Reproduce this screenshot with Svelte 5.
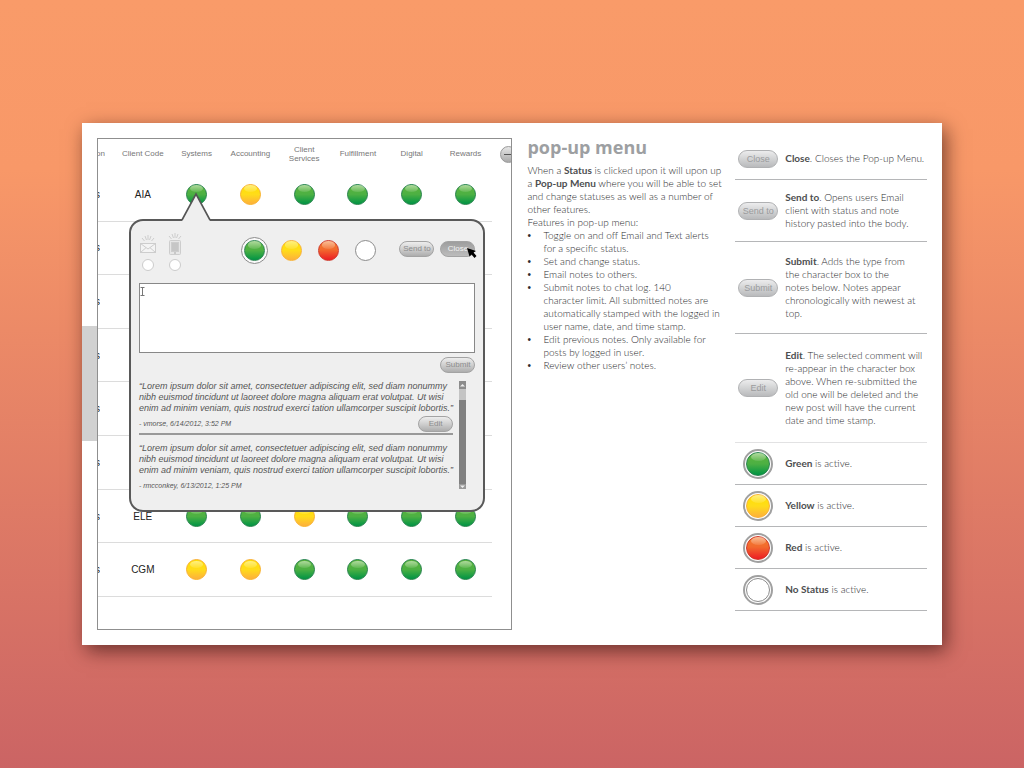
<script lang="ts">
  type Color = 'green' | 'yellow' | 'red' | 'none';

  const columns = ['Systems', 'Accounting', 'Client Services', 'Fulfillment', 'Digital', 'Rewards'];

  const rows: { code: string; statuses: Color[] }[] = [
    { code: 'AIA', statuses: ['green', 'yellow', 'green', 'green', 'green', 'green'] },
    { code: '', statuses: [] },
    { code: '', statuses: [] },
    { code: '', statuses: [] },
    { code: '', statuses: [] },
    { code: '', statuses: [] },
    { code: 'ELE', statuses: ['green', 'green', 'yellow', 'green', 'green', 'green'] },
    { code: 'CGM', statuses: ['yellow', 'yellow', 'green', 'green', 'green', 'green'] },
  ];

  const choices: Color[] = ['green', 'yellow', 'red', 'none'];

  const lorem = [
    '“Lorem ipsum dolor sit amet, consectetuer adipiscing elit, sed diam nonummy',
    'nibh euismod tincidunt ut laoreet dolore magna aliquam erat volutpat. Ut wisi',
    'enim ad minim veniam, quis nostrud exerci tation ullamcorper suscipit lobortis.”',
  ].join('\n');

  const notes = [
    { author: 'vmorse, 6/14/2012, 3:52 PM', editable: true },
    { author: 'rmcconkey, 6/13/2012, 1:25 PM', editable: false },
  ];

  const features = [
    'Toggle on and off Email and Text alerts\nfor a specific status.',
    'Set and change status.',
    'Email notes to others.',
    'Submit notes to chat log. 140\ncharacter limit. All submitted notes are\nautomatically stamped with the logged in\nuser name, date, and time stamp.',
    'Edit previous notes. Only available for\nposts by logged in user.',
    'Review other users’ notes.',
  ];

  const actions = [
    { name: 'Close', size: 'short', text: '. Closes the Pop-up Menu.' },
    { name: 'Send to', size: 'medium', text: '. Opens users Email\nclient with status and note\nhistory pasted into the body.' },
    { name: 'Submit', size: 'tall', text: '. Adds the type from\nthe character box to the\nnotes below. Notes appear\nchronologically with newest at\ntop.' },
    { name: 'Edit', size: 'tallest', text: '. The selected comment will\nre-appear in the character box\nabove. When re-submitted the\nold one will be deleted and the\nnew post will have the current\ndate and time stamp.' },
  ];

  const legend: { name: string; color: Color }[] = [
    { name: 'Green', color: 'green' },
    { name: 'Yellow', color: 'yellow' },
    { name: 'Red', color: 'red' },
    { name: 'No Status', color: 'none' },
  ];

  let selected: Color = $state('green');
  let note = $state('');
</script>

<main>
  <article class="card">
    <div class="tab"></div>

    <section class="board">
      <table>
        <colgroup>
          <col class="edge-col" />
          <col span="7" />
        </colgroup>
        <thead>
          <tr>
            <th><span class="edge wide">on</span></th>
            <th>Client Code</th>
            {#each columns as column}
              <th>{column}</th>
            {/each}
          </tr>
        </thead>
        <tbody>
          {#each rows as row}
            <tr>
              <td><span class="edge">s</span></td>
              <td>{row.code}</td>
              {#each columns as column, i}
                <td>
                  {#if row.statuses[i]}
                    <button class="orb {row.statuses[i]}" aria-label={column}></button>
                  {/if}
                </td>
              {/each}
            </tr>
          {/each}
        </tbody>
      </table>
      <div class="side">
        <button class="collapse" aria-label="Collapse"></button>
      </div>

      <div class="popup">
        <svg class="pointer" width="30" height="30" viewBox="0 0 30 30">
          <path d="M1 29 L15 2 L29 29 V30 H1 Z" fill="#efefef" />
          <path d="M1 28 L15 2 L29 28" fill="none" stroke="#555" stroke-width="1.6" />
        </svg>

        <div class="toolbar">
          <div class="alerts">
            <label>
              <svg width="18" height="22" viewBox="0 0 18 22" fill="none" stroke="#cdcdcd">
                <path d="M9 2v5M6 3l1.5 4M12 3l-1.5 4M3 5l2.5 3M15 5l-2.5 3" />
                <rect x="1.5" y="10.5" width="15" height="9" fill="#f4f4f4" />
                <path d="M1.5 10.5L9 16l7.5-5.5M1.5 19.5L7 14.7M16.5 19.5L11 14.7" />
              </svg>
              <input type="checkbox" aria-label="Email" />
            </label>
            <label>
              <svg width="18" height="22" viewBox="0 0 18 22" fill="none" stroke="#cdcdcd">
                <path d="M9 0v5M6 1l1.5 4M12 1l-1.5 4M3 3l2.5 3M15 3l-2.5 3" />
                <rect x="3.5" y="7.5" width="11" height="14" rx="1" fill="#e6e6e6" />
                <rect x="5.5" y="9.5" width="7" height="9" fill="#c6c6c6" />
                <path d="M8 20h2" stroke="#aaa" />
              </svg>
              <input type="checkbox" aria-label="Text" />
            </label>
          </div>

          <div class="choices">
            {#each choices as color}
              <span class="choice" class:picked={selected === color}>
                <button class="orb {color}" aria-label={color} onclick={() => (selected = color)}></button>
              </span>
            {/each}
          </div>

          <div class="actions">
            <button class="pill">Send to</button>
            <button class="pill pressed">Close</button>
            <svg class="cursor" width="11" height="12" viewBox="0 0 11 12">
              <path d="M1 1 L10 4 L7.5 5.5 L10.5 9 L8.5 11 L5.5 7.5 L3.5 9.5 Z" fill="#000" />
            </svg>
          </div>
        </div>

        <div class="entry">
          <textarea aria-label="Note" maxlength="140" bind:value={note}></textarea>
          <svg class="caret" width="5" height="9" viewBox="0 0 5 9" fill="none" stroke="#777">
            <path d="M0.5 0.5h4M0.5 8.5h4M2.5 0.5v8" />
          </svg>
        </div>

        <div class="submit">
          <button class="pill">Submit</button>
        </div>

        <div class="log">
          <div class="notes">
            {#each notes as item}
              <div class="note">
                <p>{lorem}</p>
                <div class="byline">
                  <span>- {item.author}</span>
                  {#if item.editable}
                    <button class="pill">Edit</button>
                  {/if}
                </div>
              </div>
            {/each}
          </div>
          <div class="scrollbar">
            <svg width="7" height="8" viewBox="0 0 7 8">
              <rect width="7" height="8" fill="#8c8c8c" />
              <path d="M1 5.5L3.5 3L6 5.5Z" fill="#eee" />
            </svg>
            <span class="thumb"></span>
            <svg width="7" height="5" viewBox="0 0 7 5">
              <rect width="7" height="5" fill="#999" />
              <path d="M1 1.5L3.5 4L6 1.5Z" fill="#eee" />
            </svg>
          </div>
        </div>
      </div>
    </section>

    <section class="intro">
      <h1>pop-up menu</h1>
      <p>When a <b>Status</b> is clicked upon it will upon up<br />a <b>Pop-up Menu</b> where you will be able to set<br />and change statuses as well as a number of<br />other features.</p>
      <p>Features in pop-up menu:</p>
      <ul>
        {#each features as feature}
          <li>{feature}</li>
        {/each}
      </ul>
    </section>

    <ul class="legend">
      {#each actions as action}
        <li class={action.size}>
          <span class="sample"><button class="pill large">{action.name}</button></span>
          <p><b>{action.name}</b>{action.text}</p>
        </li>
      {/each}
      {#each legend as item}
        <li class="short">
          <span class="sample"><span class="ring"><span class="orb big {item.color}"></span></span></span>
          <p><b>{item.name}</b> is active.</p>
        </li>
      {/each}
    </ul>
  </article>
</main>

<style>
  :global(body) {
    margin: 0;
    font-family: Lato, 'Open Sans', sans-serif;
    color: #2c2d2f;
  }

  main {
    min-height: 100vh;
    display: flex;
    align-items: center;
    justify-content: center;
    background: linear-gradient(#f99b69 0%, #f89868 22%, #cb6464 100%);
  }

  h1,
  p,
  ul {
    margin: 0;
    padding: 0;
  }

  ul {
    list-style: none;
  }

  b {
    font-weight: 700;
    color: #4d4e50;
  }

  button {
    padding: 0;
    font-family: 'Liberation Sans', Arial, sans-serif;
    cursor: pointer;
  }

  .card {
    position: relative;
    box-sizing: border-box;
    width: 84%;
    padding: 15px;
    display: grid;
    grid-template-columns: minmax(0, 416fr) minmax(0, 193fr) minmax(0, 192fr);
    column-gap: 15px;
    background: #fff;
    box-shadow: 4px 6px 18px rgba(40, 10, 10, 0.6);
    font-size: 10px;
    line-height: 13px;
    font-weight: 300;
  }

  .tab {
    position: absolute;
    left: 0;
    top: 203px;
    width: 15px;
    height: 115px;
    background: #d1d1d1;
  }

  .board {
    position: relative;
    display: grid;
    grid-template-columns: minmax(0, 1fr) 19px;
    align-items: start;
    padding-bottom: 32px;
    border: 1px solid #8f8f8f;
    background: #fff;
    font-family: 'Liberation Sans', Arial, sans-serif;
    font-weight: normal;
  }

  table {
    width: 100%;
    height: 458px;
    table-layout: fixed;
    border-collapse: collapse;
    text-align: center;
  }

  .edge-col {
    width: 18px;
  }

  th,
  td {
    padding: 0;
    vertical-align: middle;
  }

  th {
    height: 29px;
    font-size: 8px;
    line-height: 9px;
    font-weight: normal;
    color: #777;
  }

  th:nth-child(5) {
    padding: 0 8px;
  }

  td {
    height: 52px;
    border-bottom: 1px solid #dcdcdc;
    font-size: 10px;
    color: #222;
  }

  .edge {
    display: flex;
    justify-content: flex-end;
    width: 2px;
    overflow: hidden;
  }

  .edge.wide {
    width: 7px;
  }

  .side {
    overflow: hidden;
  }

  .collapse {
    position: relative;
    display: block;
    width: 17px;
    height: 17px;
    margin: 7px 0 0 8px;
    border: 1px solid #999;
    border-radius: 50%;
    background: linear-gradient(#e6e6e6, #a9a9a9);
  }

  .collapse::before {
    content: '';
    position: absolute;
    left: 3px;
    top: 7px;
    width: 9px;
    height: 1px;
    background: #555;
  }

  .orb {
    position: relative;
    display: block;
    box-sizing: border-box;
    width: 21px;
    height: 21px;
    margin: 0 auto;
    border: 1px solid;
    border-radius: 50%;
  }

  .orb::before {
    content: '';
    position: absolute;
    left: 15%;
    top: 2%;
    width: 70%;
    height: 38%;
    border-radius: 50%;
    background: linear-gradient(rgba(255, 255, 255, 0.5), rgba(255, 255, 255, 0.1));
  }

  .orb.big {
    width: 24px;
    height: 24px;
  }

  .green {
    border-color: #2a8450;
    background: linear-gradient(#5fb53c, #4cb043 50%, #009444);
  }

  .yellow {
    border-color: #f9b233;
    background: linear-gradient(#ffe100, #ffdc1a 50%, #fdb03c);
  }

  .red {
    border-color: #d0392b;
    background: linear-gradient(#f47b2c, #f26a2e 45%, #ed1c24);
  }

  .none {
    border-color: #8c8c8c;
    background: #fff;
  }

  .none::before {
    display: none;
  }

  .popup {
    position: absolute;
    left: 31px;
    right: 26px;
    top: 80px;
    box-sizing: border-box;
    padding: 12px 8px 15px;
    border: 2px solid #595959;
    border-radius: 14px;
    background: #efefef;
  }

  .pointer {
    position: absolute;
    left: 50px;
    top: -29px;
  }

  .toolbar {
    display: flex;
    align-items: flex-start;
  }

  .alerts {
    display: flex;
    gap: 9px;
    width: 102px;
  }

  .alerts label {
    display: flex;
    flex-direction: column;
    align-items: center;
    gap: 4px;
  }

  .alerts input {
    appearance: none;
    box-sizing: border-box;
    width: 12px;
    height: 12px;
    margin: 0;
    border: 1px solid #ccc;
    border-radius: 50%;
    background: #fff;
  }

  .alerts input:checked {
    background: #999;
  }

  .choices {
    display: flex;
    gap: 10px;
    padding-top: 4px;
  }

  .choice,
  .ring {
    box-sizing: border-box;
    display: flex;
    align-items: center;
    justify-content: center;
    width: 27px;
    height: 27px;
    border: 1px solid transparent;
    border-radius: 50%;
  }

  .choice.picked {
    border-color: #8c8c8c;
    background: #fafafa;
  }

  .actions {
    position: relative;
    display: flex;
    gap: 6px;
    margin-left: auto;
    padding-top: 8px;
  }

  .pill {
    box-sizing: border-box;
    width: 35px;
    height: 16px;
    border: 1px solid #a3a3a3;
    border-radius: 8px;
    background: linear-gradient(#ededed, #cfcfcf 50%, #adadad);
    color: #8c8c8c;
    font-size: 8px;
    line-height: 12px;
  }

  .pill.pressed {
    background: linear-gradient(#9e9e9e, #bcbcbc);
    color: #f2f2f2;
  }

  .pill.large {
    width: 40px;
    height: 18px;
    border-color: #b0b1b3;
    border-radius: 9px;
    background: linear-gradient(#ececed, #d2d3d4 50%, #b9babc);
    color: #9a9b9d;
    font-size: 9px;
  }

  .cursor {
    position: absolute;
    right: -2px;
    bottom: -2px;
  }

  .entry {
    position: relative;
    display: flex;
    margin-top: 12px;
  }

  textarea {
    flex: 1;
    min-width: 0;
    box-sizing: border-box;
    height: 70px;
    padding: 4px 8px;
    border: 1px solid #888;
    border-radius: 0;
    background: #fff;
    font-family: 'Liberation Sans', Arial, sans-serif;
    font-size: 9px;
    resize: none;
    outline: none;
  }

  .caret {
    position: absolute;
    left: 1px;
    top: 4px;
  }

  .submit {
    display: flex;
    justify-content: flex-end;
    padding-top: 4px;
  }

  .log {
    display: flex;
    align-items: flex-start;
    justify-content: space-between;
    margin-top: 8px;
    padding-right: 9px;
  }

  .note p {
    white-space: pre;
    font-size: 9px;
    line-height: 11px;
    font-style: italic;
    color: #555;
  }

  .note + .note {
    margin-top: 8px;
  }

  .note:first-child {
    border-bottom: 2px solid #999;
  }

  .byline {
    display: flex;
    align-items: center;
    justify-content: space-between;
    height: 19px;
    font-size: 7px;
    font-style: italic;
    color: #555;
  }

  .scrollbar {
    display: flex;
    flex-direction: column;
    width: 7px;
    height: 108px;
    background: #808080;
  }

  .thumb {
    height: 11px;
    margin-bottom: auto;
    background: #c4c4c4;
  }

  .intro h1 {
    margin-bottom: 8px;
    font-family: 'Open Sans', sans-serif;
    font-size: 18px;
    line-height: 18px;
    font-weight: bold;
    color: #9d9fa2;
  }

  .intro p,
  .intro li {
    white-space: pre;
  }

  .intro li {
    position: relative;
    padding-left: 16px;
  }

  .intro li::before {
    content: '•';
    position: absolute;
    left: 0;
    font-family: 'Liberation Sans', Arial, sans-serif;
  }

  .legend li {
    box-sizing: border-box;
    display: flex;
    align-items: center;
    border-bottom: 1px solid #b5b6b8;
  }

  .legend .sample {
    display: flex;
    justify-content: center;
    width: 46px;
    margin-right: 4px;
  }

  .legend p {
    white-space: pre;
  }

  .legend .short {
    height: 42px;
  }

  .legend .medium {
    padding: 11px 0;
  }

  .legend .tall {
    padding: 13px 0;
  }

  .legend .tallest {
    padding: 15px 0;
    border-bottom-color: #e2e2e3;
  }

  .ring {
    width: 30px;
    height: 30px;
    border: 2px solid #a0a0a0;
    background: #fff;
  }
</style>
